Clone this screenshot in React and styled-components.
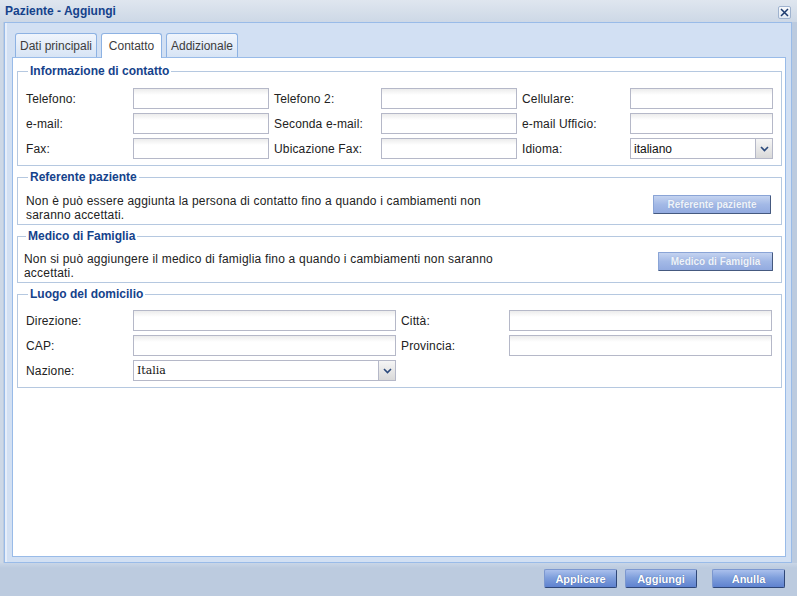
import styled, { createGlobalStyle } from 'styled-components'

const GlobalStyle = createGlobalStyle`
  html, body {
    margin: 0;
    padding: 0;
    background: #bccbdf;
  }
  body {
    font-family: "Liberation Sans", Arial, sans-serif;
    font-size: 12px;
    color: #1f1f1f;
  }
`

const Window = styled.div`
  width: 797px;
  height: 596px;
  display: flex;
  flex-direction: column;
  background: linear-gradient(to right, #cdd8e6 0, #cdd8e6 3px, #bccbdf 3px);
  overflow: hidden;
`

const TitleBar = styled.div`
  height: 22px;
  flex: none;
  display: flex;
  align-items: center;
  justify-content: space-between;
  padding: 0 6px 0 5px;
  background: linear-gradient(#dfe6ef, #cdd8e6);
`

const Title = styled.div`
  font-weight: bold;
  font-size: 12px;
  color: #15428b;
`

const CloseButton = styled.div`
  width: 11px;
  height: 11px;
  border: 1px solid #9fb3cf;
  border-radius: 2px;
  background: linear-gradient(#f7f9fc, #e3eaf3);
  display: flex;
  align-items: center;
  justify-content: center;
  margin-top: 2px;
`

const Frame = styled.div`
  height: 541px;
  flex: none;
  padding: 0 5px 0 4px;
  display: flex;
`

const Panel = styled.div`
  flex: 1;
  border: 1px solid #99bbe8;
  box-shadow: inset 2px 0 0 #e6eefa;
  background: #d2e0f3;
  padding: 9px 5px 5px 7px;
  display: flex;
  flex-direction: column;
`

const TabStrip = styled.div`
  display: flex;
  align-items: flex-end;
  gap: 4px;
  padding-left: 3px;
  height: 25px;
  position: relative;
  z-index: 1;
`

const Tab = styled.div`
  width: ${p => p.$w}px;
  height: ${p => (p.$active ? 25 : 24)}px;
  box-sizing: border-box;
  display: flex;
  align-items: center;
  justify-content: center;
  border: 1px solid #8db2e3;
  border-bottom: none;
  border-radius: 3px 3px 0 0;
  background: ${p => (p.$active ? '#ffffff' : 'linear-gradient(#f0f5fc, #d7e4f5)')};
  color: #3c3c3c;
  font-size: 12px;
  white-space: nowrap;
  margin-bottom: ${p => (p.$active ? -1 : 0)}px;
  padding-bottom: ${p => (p.$active ? 1 : 0)}px;
`

const Content = styled.div`
  flex: 1;
  background: #ffffff;
  border: 1px solid #99bbe8;
  padding: 6px 3px 0 4px;
  display: flex;
  flex-direction: column;
  gap: 4px;
`

const Fieldset = styled.fieldset`
  margin: 0;
  border: 1px solid #b5c8e0;
  padding: ${p => p.$pad || '10px 8px 6px 8px'};
  min-width: 0;
`

const Legend = styled.legend`
  font-weight: bold;
  font-size: 12px;
  line-height: 14px;
  color: #15428b;
  padding: 0 2px;
  margin-left: 2px;
`

const FieldGrid = styled.div`
  display: grid;
  grid-template-columns: ${p => p.$cols};
  row-gap: 4px;
  align-items: center;
`

const Label = styled.div`
  font-size: 12px;
  letter-spacing: 0.15px;
  color: #222;
`

const TextInput = styled.div`
  box-sizing: border-box;
  width: ${p => p.$w}px;
  height: 21px;
  border: 1px solid #b5b8c8;
  background: linear-gradient(#ececec, #ffffff 6px);
`

const Combo = styled.div`
  box-sizing: border-box;
  width: ${p => p.$w}px;
  height: 21px;
  border: 1px solid #b5b8c8;
  background: #ffffff;
  display: flex;
  align-items: stretch;
`

const ComboValue = styled.div`
  flex: 1;
  padding-left: 3px;
  display: flex;
  align-items: center;
  color: #111;
  font-family: ${p => (p.$serif ? '"DejaVu Serif", serif' : 'inherit')};
  font-size: ${p => (p.$serif ? 11 : 12)}px;
`

const Trigger = styled.div`
  width: 16px;
  border-left: 1px solid #b5b8c8;
  background: linear-gradient(#f6f6f6, #d9d9d9);
  display: flex;
  align-items: center;
  justify-content: center;
`

const NoticeRow = styled.div`
  display: flex;
  justify-content: space-between;
  align-items: flex-start;
`

const Notice = styled.div`
  font-size: 12px;
  line-height: 14px;
  letter-spacing: 0.2px;
  color: #222;
  width: 480px;
`

const ActionButton = styled.div`
  box-sizing: border-box;
  height: 19px;
  margin-top: ${p => p.$mt || 0}px;
  display: flex;
  align-items: center;
  justify-content: center;
  width: ${p => p.$w}px;
  white-space: nowrap;
  border: 1px solid #8aa4d6;
  border-right-color: #45597f;
  border-bottom-color: #45597f;
  border-radius: 1px;
  background: linear-gradient(#c4d3f0, #a3b9e6 50%, #93abe0);
  color: #eef3fb;
  font-weight: bold;
  font-size: 10px;
  text-shadow: 0 0 1px #8ea2c8;
`

const Footer = styled.div`
  flex: 1;
  display: flex;
  justify-content: flex-end;
  align-items: flex-start;
  padding: 6px 12px 0 0;
  gap: 8px;
  background: linear-gradient(#c9d6e7, #bccbdf 5px);
`

const FooterButton = styled.div`
  box-sizing: border-box;
  width: ${p => p.$w}px;
  height: 19px;
  margin-left: ${p => p.$ml || 0}px;
  display: flex;
  align-items: center;
  justify-content: center;
  border: 1px solid #7b97cf;
  border-right-color: #2e4677;
  border-bottom-color: #2e4677;
  border-radius: 2px;
  background: linear-gradient(#a9bfec, #7f9fdc 45%, #5f82cf);
  color: #ffffff;
  font-weight: bold;
  font-size: 11px;
  text-shadow: 0 0 1px #3c5a9a;
`

const Chevron = () => (
  <svg width="9" height="6" viewBox="0 0 9 6">
    <path d="M1 1 L4.5 4.5 L8 1" fill="none" stroke="#2c4a7c" strokeWidth="1.6" />
  </svg>
)

const CloseIcon = () => (
  <svg width="9" height="9" viewBox="0 0 9 9">
    <path d="M1 1 L8 8 M8 1 L1 8" stroke="#1d3b6e" strokeWidth="1.5" />
  </svg>
)

const contactCols = '107px 141px 107px 141px 108px 143px'
const addressCols = '107px 268px 108px 263px'

export default function App() {
  return (
    <Window>
      <GlobalStyle />
      <TitleBar>
        <Title>Paziente - Aggiungi</Title>
        <CloseButton><CloseIcon /></CloseButton>
      </TitleBar>
      <Frame>
        <Panel>
          <TabStrip>
            <Tab $w={82}>Dati principali</Tab>
            <Tab $w={61} $active>Contatto</Tab>
            <Tab $w={72}>Addizionale</Tab>
          </TabStrip>
          <Content>
            <Fieldset>
              <Legend>Informazione di contatto</Legend>
              <FieldGrid $cols={contactCols}>
                <Label>Telefono:</Label>
                <TextInput $w={136} />
                <Label>Telefono 2:</Label>
                <TextInput $w={136} />
                <Label>Cellulare:</Label>
                <TextInput $w={143} />
                <Label>e-mail:</Label>
                <TextInput $w={136} />
                <Label>Seconda e-mail:</Label>
                <TextInput $w={136} />
                <Label>e-mail Ufficio:</Label>
                <TextInput $w={143} />
                <Label>Fax:</Label>
                <TextInput $w={136} />
                <Label>Ubicazione Fax:</Label>
                <TextInput $w={136} />
                <Label>Idioma:</Label>
                <Combo $w={143}>
                  <ComboValue>italiano</ComboValue>
                  <Trigger><Chevron /></Trigger>
                </Combo>
              </FieldGrid>
            </Fieldset>
            <Fieldset $pad="10px 10px 2px 8px">
              <Legend>Referente paziente</Legend>
              <NoticeRow>
                <Notice>
                  Non è può essere aggiunta la persona di contatto fino a quando i cambiamenti non saranno accettati.
                </Notice>
                <ActionButton $w={118} $mt={1}>Referente paziente</ActionButton>
              </NoticeRow>
            </Fieldset>
            <Fieldset $pad="9px 8px 2px 6px">
              <Legend>Medico di Famiglia</Legend>
              <NoticeRow>
                <Notice>
                  Non si può aggiungere il medico di famiglia fino a quando i cambiamenti non saranno accettati.
                </Notice>
                <ActionButton $w={115} $mt={0}>Medico di Famiglia</ActionButton>
              </NoticeRow>
            </Fieldset>
            <Fieldset $pad="9px 8px 6px 8px">
              <Legend>Luogo del domicilio</Legend>
              <FieldGrid $cols={addressCols}>
                <Label>Direzione:</Label>
                <TextInput $w={263} />
                <Label>Città:</Label>
                <TextInput $w={263} />
                <Label>CAP:</Label>
                <TextInput $w={263} />
                <Label>Provincia:</Label>
                <TextInput $w={263} />
                <Label>Nazione:</Label>
                <Combo $w={263}>
                  <ComboValue $serif>Italia</ComboValue>
                  <Trigger><Chevron /></Trigger>
                </Combo>
              </FieldGrid>
            </Fieldset>
          </Content>
        </Panel>
      </Frame>
      <Footer>
        <FooterButton $w={73}>Applicare</FooterButton>
        <FooterButton $w={72}>Aggiungi</FooterButton>
        <FooterButton $w={73} $ml={7}>Anulla</FooterButton>
      </Footer>
    </Window>
  )
}
